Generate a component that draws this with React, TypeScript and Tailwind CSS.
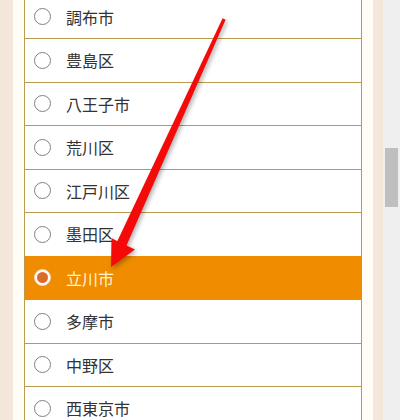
const cities = [
  "調布市",
  "豊島区",
  "八王子市",
  "荒川区",
  "江戸川区",
  "墨田区",
  "立川市",
  "多摩市",
  "中野区",
  "西東京市",
];

const selected = "立川市";

function CityRow({ name, active }: { name: string; active: boolean }) {
  if (active) {
    return (
      <div className="-mt-px flex h-[44.5px] shrink-0 items-center border-t border-b border-[#ef8c00] bg-[#ef8c00]">
        <span className="ml-[9px] flex h-[17px] w-[17px] items-center justify-center rounded-full border border-[#f6d7b0] bg-white">
          <span className="h-[11px] w-[11px] rounded-full bg-[#dc6a2c]" />
        </span>
        <span className="ml-[15px] text-[16px] leading-none text-[#fff4cf]">{name}</span>
      </div>
    );
  }
  return (
    <div className="flex h-[43.5px] shrink-0 items-center border-b border-[#b99a4e]">
      <span className="ml-[9px] h-[17px] w-[17px] rounded-full border border-[#808080] bg-white" />
      <span className="ml-[15px] text-[16px] leading-none text-[#333333]">{name}</span>
    </div>
  );
}

export default function App() {
  return (
    <div
      className="relative flex h-[420px] w-[400px] overflow-hidden bg-white"
      style={{ fontFamily: '"Noto Sans CJK JP", "Noto Sans", sans-serif' }}
    >
      {/* page gutter */}
      <div className="w-[13px] shrink-0 bg-[#f5e6dc]" />
      <div className="w-[11px] shrink-0 bg-[#fffdf6]" />

      {/* city list */}
      <div className="-mt-[4.5px] flex w-[338px] shrink-0 flex-col border-x border-[#b99a4e] bg-white">
        {cities.map((c) => (
          <CityRow key={c} name={c} active={c === selected} />
        ))}
      </div>

      <div className="w-[11px] shrink-0 bg-[#fffdf6]" />
      <div className="w-[10px] shrink-0 bg-[#f5e6dc]" />

      {/* scrollbar */}
      <div className="flex w-[17px] shrink-0 flex-col bg-[#efefef]">
        <div className="mx-[2px] mt-[148px] h-[59px] bg-[#bfbfbf]" />
      </div>

      {/* red annotation arrow */}
      <svg
        className="pointer-events-none absolute left-0 top-0 drop-shadow-[2px_2px_2px_rgba(0,0,0,0.3)]"
        width="400"
        height="420"
        viewBox="0 0 400 420"
      >
        <polygon
          points="222.6,18.2 225.6,19.7 126.5,245.5 135,249.5 111,267 111.5,238 117.3,241.2"
          fill="#f50a0a"
          strokeLinejoin="round"
        />
      </svg>
    </div>
  );
}
